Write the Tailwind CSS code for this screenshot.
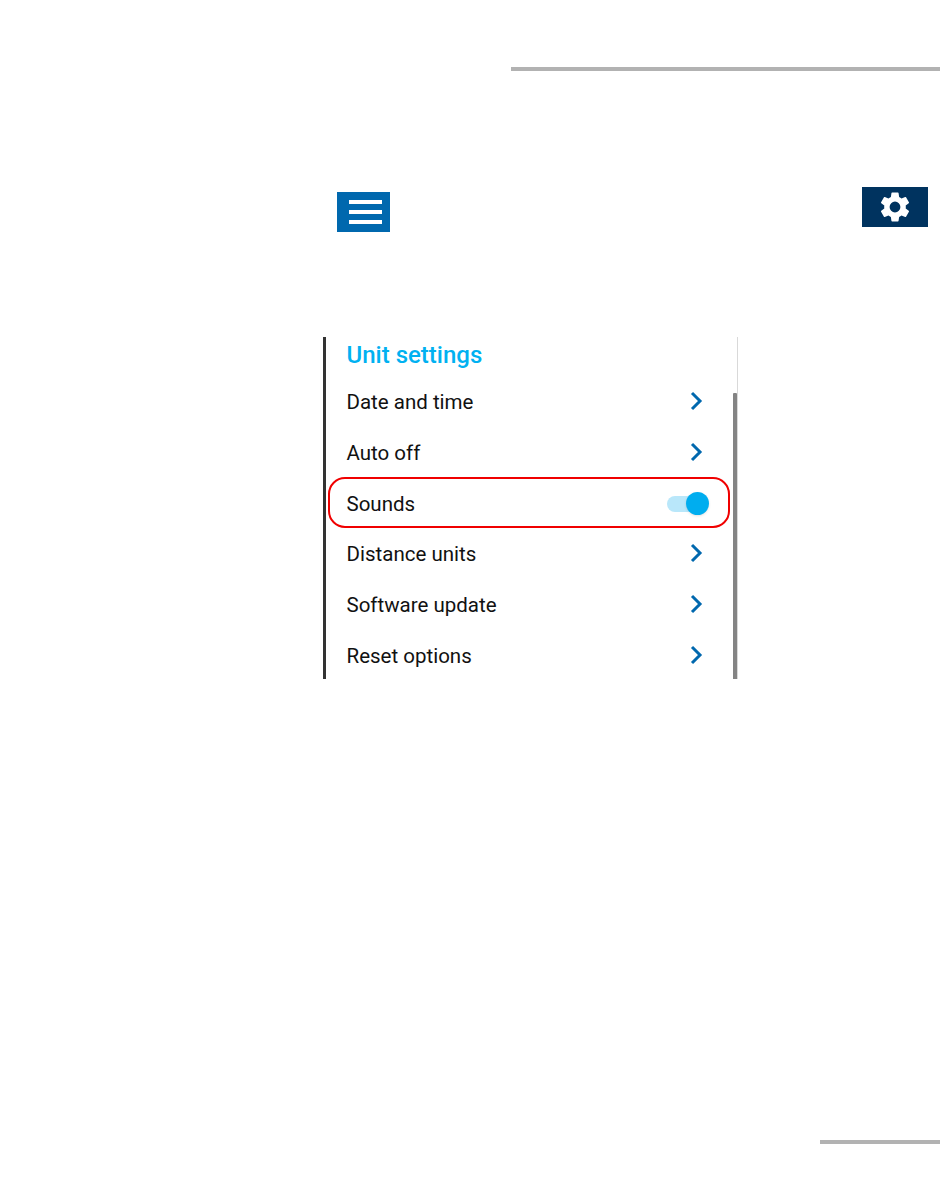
<!DOCTYPE html>
<html lang="en">
<head>
    <meta charset="UTF-8">
    <meta name="viewport" content="width=device-width, initial-scale=1.0">
    <title>Unit settings</title>
    <script src="https://cdn.jsdelivr.net/npm/@tailwindcss/browser@4"></script>
</head>
<body class="bg-white font-['Roboto',sans-serif] min-h-screen relative overflow-hidden">
    <!-- Header rule -->
    <div class="pt-[67px] flex justify-end pr-[10px]">
        <div class="w-[429px] h-[4px] bg-[#b2b2b2]"></div>
    </div>

    <!-- Toolbar -->
    <div class="mt-[116px] flex items-start pl-[337px] pr-[22px] justify-between">
        <button class="mt-[5px] w-[53px] h-[40px] pl-[4px] bg-[#0068ae] flex flex-col items-center justify-center gap-[6px]">
            <span class="block w-[33px] h-[4px] bg-white"></span>
            <span class="block w-[33px] h-[4px] bg-white"></span>
            <span class="block w-[33px] h-[4px] bg-white"></span>
        </button>
        <button class="w-[66px] h-[40px] bg-[#00335f] flex items-center justify-center">
            <svg class="w-[36px] h-[36px]" viewBox="0 0 24 24" fill="#fff">
                <path d="M19.14 12.94c.04-.3.06-.61.06-.94s-.02-.64-.07-.94l2.03-1.58a.49.49 0 0 0 .12-.61l-1.92-3.32a.49.49 0 0 0-.59-.22l-2.39.96c-.5-.38-1.03-.7-1.62-.94l-.36-2.54a.48.48 0 0 0-.48-.41h-3.84a.47.47 0 0 0-.47.41l-.36 2.54c-.59.24-1.13.57-1.62.94l-2.39-.96a.48.48 0 0 0-.59.22L2.74 8.87a.47.47 0 0 0 .12.61l2.03 1.58c-.05.3-.09.63-.09.94s.02.64.07.94l-2.03 1.58a.49.49 0 0 0-.12.61l1.92 3.32c.12.22.37.29.59.22l2.39-.96c.5.38 1.03.7 1.62.94l.36 2.54c.05.24.24.41.48.41h3.84c.24 0 .44-.17.47-.41l.36-2.54c.59-.24 1.13-.56 1.62-.94l2.39.96c.22.08.47 0 .59-.22l1.92-3.32a.47.47 0 0 0-.12-.61zM12 15.6A3.6 3.6 0 1 1 12 8.4a3.6 3.6 0 0 1 0 7.2z"/>
            </svg>
        </button>
    </div>

    <!-- Settings panel -->
    <div class="relative mt-[105px] ml-[323px] w-[415px] h-[342px] flex border-l-[3px] border-[#333333]">
        <div class="flex-1 pl-[20.5px] pr-[29px]">
            <h2 class="h-[39px] pt-[3px] text-[24px] leading-[30px] font-medium text-[#00b1f1]">Unit settings</h2>

            <div class="h-[51px] flex items-center justify-between text-[20.5px] text-[#111111]">
                <span class="mt-[2px]">Date and time</span>
                <svg class="w-[14px] h-[22px]" viewBox="0 0 14 22" fill="none" stroke="#0068ae" stroke-width="3"><path d="M2 2l8 8-8 8"/></svg>
            </div>
            <div class="h-[51px] flex items-center justify-between text-[20.5px] text-[#111111]">
                <span class="mt-[2px]">Auto off</span>
                <svg class="w-[14px] h-[22px]" viewBox="0 0 14 22" fill="none" stroke="#0068ae" stroke-width="3"><path d="M2 2l8 8-8 8"/></svg>
            </div>
            <div class="h-[51px] flex items-center justify-between text-[20.5px] text-[#111111]">
                <span class="mt-[2px]">Sounds</span>
                <div class="relative w-[43px] h-[24px] mr-[-6px] flex items-center">
                    <div class="w-[33px] h-[16px] rounded-full bg-[#b9e7fa]"></div>
                    <div class="absolute right-[1px] top-0 w-[23px] h-[23px] rounded-full bg-[#00adef] shadow-sm"></div>
                </div>
            </div>
            <div class="h-[50px] flex items-center justify-between text-[20.5px] text-[#111111]">
                <span>Distance units</span>
                <svg class="w-[14px] h-[22px]" viewBox="0 0 14 22" fill="none" stroke="#0068ae" stroke-width="3"><path d="M2 2l8 8-8 8"/></svg>
            </div>
            <div class="h-[51px] flex items-center justify-between text-[20.5px] text-[#111111]">
                <span class="mt-[2px]">Software update</span>
                <svg class="w-[14px] h-[22px]" viewBox="0 0 14 22" fill="none" stroke="#0068ae" stroke-width="3"><path d="M2 2l8 8-8 8"/></svg>
            </div>
            <div class="h-[51px] flex items-center justify-between text-[20.5px] text-[#111111]">
                <span class="mt-[2px]">Reset options</span>
                <svg class="w-[14px] h-[22px]" viewBox="0 0 14 22" fill="none" stroke="#0068ae" stroke-width="3"><path d="M2 2l8 8-8 8"/></svg>
            </div>
        </div>

        <!-- Scrollbar -->
        <div class="w-[5px] flex flex-col border-r border-[#d9d9d9]">
            <div class="h-[56px]"></div>
            <div class="flex-1 w-[4px] bg-[#848484] rounded-t-[1px]"></div>
        </div>

        <!-- Red callout -->
        <div class="absolute left-[2px] top-[140px] w-[402px] h-[51px] rounded-[17px] border-2 border-[#f00000]"></div>
    </div>

    <!-- Footer rule -->
    <div class="absolute left-[820px] top-[1140px] w-[120px] h-[4px] bg-[#b2b2b2]"></div>
</body>
</html>
